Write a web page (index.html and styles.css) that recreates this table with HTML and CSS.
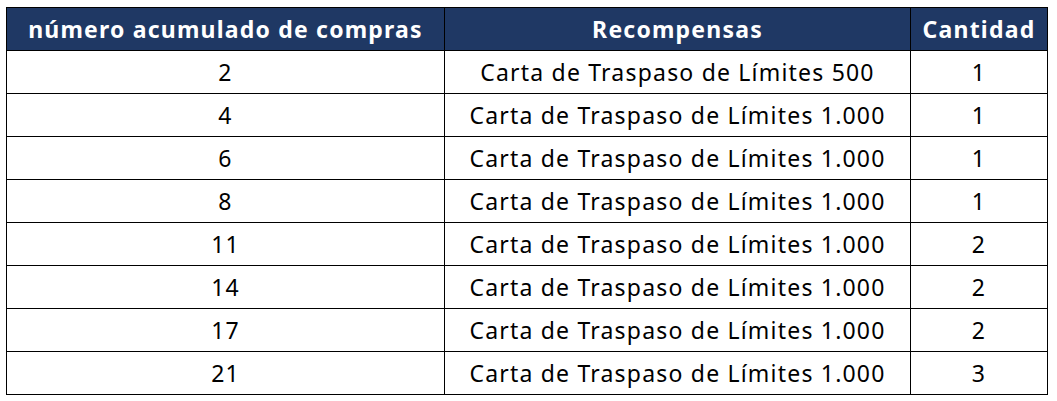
FILE: index.html
```html
<!DOCTYPE html>
<html lang="es">
<head>
<meta charset="utf-8">
<link rel="stylesheet" href="styles.css">
</head>
<body>
<table class="rewards">
  <colgroup>
    <col class="c1"><col class="c2"><col class="c3">
  </colgroup>
  <thead>
    <tr><th>número acumulado de compras</th><th>Recompensas</th><th>Cantidad</th></tr>
  </thead>
  <tbody>
    <tr><td>2</td><td>Carta de Traspaso de Límites 500</td><td>1</td></tr>
    <tr><td>4</td><td>Carta de Traspaso de Límites 1.000</td><td>1</td></tr>
    <tr><td>6</td><td>Carta de Traspaso de Límites 1.000</td><td>1</td></tr>
    <tr><td>8</td><td>Carta de Traspaso de Límites 1.000</td><td>1</td></tr>
    <tr><td>11</td><td>Carta de Traspaso de Límites 1.000</td><td>2</td></tr>
    <tr><td>14</td><td>Carta de Traspaso de Límites 1.000</td><td>2</td></tr>
    <tr><td>17</td><td>Carta de Traspaso de Límites 1.000</td><td>2</td></tr>
    <tr><td>21</td><td>Carta de Traspaso de Límites 1.000</td><td>3</td></tr>
  </tbody>
</table>
</body>
</html>
```
FILE: styles.css
```css
html, body {
  margin: 0;
  padding: 0;
  background: #ffffff;
}
body {
  padding: 7px 0 0 6px;
  font-family: "Noto Sans", "Open Sans", sans-serif;
}
.rewards {
  border-collapse: collapse;
  table-layout: fixed;
  width: 1041px;
}
.c1 { width: 438px; }
.c2 { width: 466px; }
.c3 { width: 137px; }
.rewards th,
.rewards td {
  border: 1px solid #000;
  height: 42px;
  padding: 0;
  text-align: center;
  vertical-align: middle;
  font-size: 23px;
  line-height: 1;
  letter-spacing: 1.2px;
  white-space: nowrap;
}
.rewards th {
  background: #1f3864;
  color: #fff;
  font-weight: 700;
}
.rewards td {
  color: #000;
  font-weight: 400;
}
```
